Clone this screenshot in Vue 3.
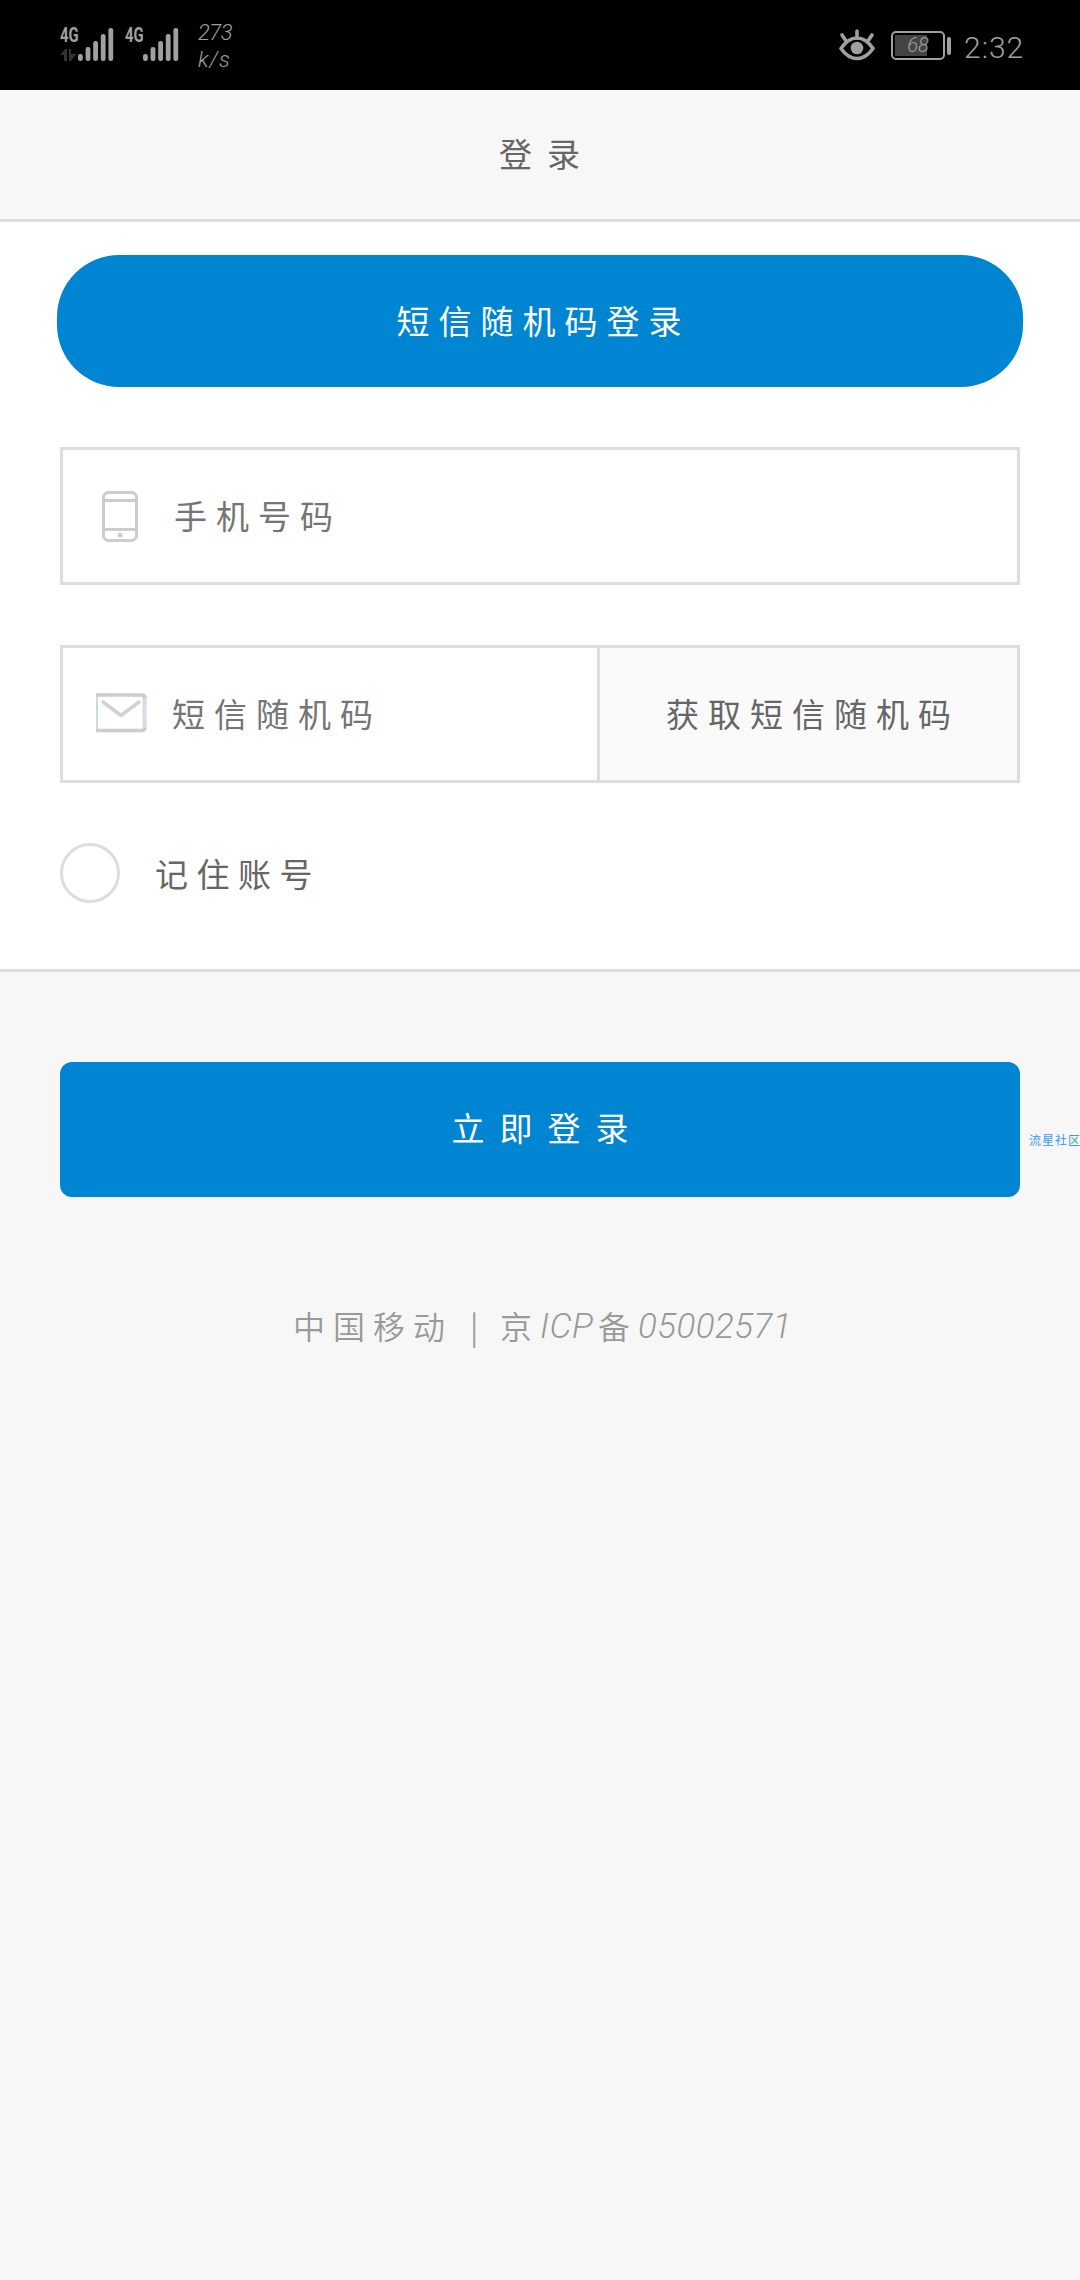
<script setup>
import { ref } from 'vue'

const phone = ref('')
const code = ref('')
const remember = ref(false)

// 信号格高度
const bars = [7, 14, 20, 27, 33]
const sims = [
  { name: '4G', data: true },
  { name: '4G', data: false }
]
</script>

<template>
  <div class="page">
    <div class="status-bar">
      <div v-for="(sim, i) in sims" :key="i" class="sim">
        <div class="sim-type">
          <span class="sim-name">{{ sim.name }}</span>
          <svg v-if="sim.data" class="sim-data" viewBox="0 0 16 12" aria-hidden="true">
            <path d="M0 6L5 0h2v12H4V6zM9 0h2v5h5l-5 7H9z" fill="#333" />
          </svg>
        </div>
        <svg class="sim-bars" viewBox="0 0 36 33" aria-hidden="true">
          <rect
            v-for="(h, n) in bars"
            :key="n"
            :x="n * 7.6"
            :y="33 - h"
            width="4.8"
            :height="h"
            rx="2.2"
            fill="#a0a0a0"
          />
        </svg>
      </div>
      <div class="speed">
        <span>273</span>
        <span>k/s</span>
      </div>
      <div class="status-right">
        <svg class="eye" viewBox="0 0 36 32" aria-hidden="true">
          <path d="M2 19.500Q9 9 18 9T34 19.500Q27 29.500 18 29.500T2 19.500z" fill="none" stroke="#a0a0a0" stroke-width="3.600" stroke-linejoin="round" />
          <circle cx="18" cy="19" r="6.300" fill="#a0a0a0" />
          <path d="M18 2v7M3 6l4 6M33 6l-4 6" stroke="#a0a0a0" stroke-width="3.600" stroke-linecap="round" />
        </svg>
        <div class="battery">
          <div class="battery-body">
            <div class="battery-level"></div>
            <span class="battery-text">68</span>
          </div>
          <div class="battery-cap"></div>
        </div>
        <span class="time">2:32</span>
      </div>
    </div>

    <header class="header">登录</header>

    <section class="form">
      <button class="tab">短信随机码登录</button>

      <div class="field">
        <svg class="icon-phone" viewBox="0 0 36 51" aria-hidden="true">
          <rect x="1.500" y="1.500" width="33" height="48" rx="5" fill="none" stroke="#ccc" stroke-width="3" />
          <path d="M2 9.500h32M2 38.500h32" stroke="#ccc" stroke-width="3" />
          <circle cx="18" cy="44" r="2.500" fill="#ccc" />
        </svg>
        <input v-model="phone" class="input" type="tel" placeholder="手机号码" />
      </div>

      <div class="field">
        <svg class="icon-mail" viewBox="0 0 51 40" aria-hidden="true">
          <path d="M1 2v36" stroke="#c9dce4" stroke-width="2" />
          <path d="M48.500 3v34" stroke="#d9dae6" stroke-width="4" />
          <path d="M0 2h46q3 0 3 3M0 37.500h46q3 0 3-3" fill="none" stroke="#ccc" stroke-width="3.500" />
          <path d="M7 9l18 13.500L43 9" fill="none" stroke="#d2d0d0" stroke-width="3.500" stroke-linecap="round" stroke-linejoin="round" />
        </svg>
        <input v-model="code" class="input input-code" type="text" placeholder="短信随机码" />
        <button class="get-code">获取短信随机码</button>
      </div>

      <div class="remember" @click="remember = !remember">
        <span class="radio" :class="{ checked: remember }"></span>
        <span>记住账号</span>
      </div>
    </section>

    <div class="submit-row">
      <button class="submit">立即登录</button>
      <span class="community">流星社区</span>
    </div>

    <footer class="footer">
      <span>中国移动</span>
      <span class="bar">|</span>
      <span>京</span>
      <span class="latin icp">ICP</span>
      <span>备</span>
      <span class="latin">05002571</span>
    </footer>
  </div>
</template>

<style>
body {
  background: #f7f7f7;
}
</style>

<style scoped>
.page {
  width: 1080px;
  min-height: 2280px;
  background: #f7f7f7;
  color: #666;
  font-family: "Noto Sans CJK SC", sans-serif;
  font-weight: 400;
  font-size: 33px;
  letter-spacing: 9px;
}

.page * {
  box-sizing: border-box;
}

button,
input {
  margin: 0;
  padding: 0;
  border: 0;
  background: none;
  font: inherit;
  letter-spacing: inherit;
  outline: none;
}

/* 状态栏 */
.status-bar {
  display: flex;
  align-items: flex-start;
  height: 90px;
  padding: 28px 56px 0 60px;
  background: #000;
  color: #a0a0a0;
  letter-spacing: 0;
}

.sim {
  display: flex;
  width: 65px;
}

.sim-type {
  display: flex;
  flex-direction: column;
  width: 18px;
}

.sim-name {
  width: 26px;
  font: bold 20px/15px Roboto, sans-serif;
  transform: scaleX(0.74);
  transform-origin: left;
}

.sim-data {
  width: 16px;
  height: 12px;
  margin-top: 6px;
}

.sim-bars {
  width: 36px;
  height: 33px;
}

.speed {
  display: flex;
  flex-direction: column;
  margin: -9px 0 0 8px;
  font: italic 300 22px/27px Roboto, sans-serif;
}

.speed span {
  letter-spacing: -0.5px;
}

.speed span:last-child {
  letter-spacing: 1px;
}

.status-right {
  display: flex;
  margin-left: auto;
}

.eye {
  width: 36px;
  height: 32px;
  margin-top: 1px;
}

.battery {
  display: flex;
  align-items: center;
  height: 29px;
  margin: 3px 0 0 16px;
}

.battery-body {
  display: flex;
  position: relative;
  width: 54px;
  height: 29px;
  padding: 2px;
  border: 2px solid #a0a0a0;
  border-radius: 5px;
}

.battery-level {
  width: 32px;
  height: 21px;
  background: #444;
}

.battery-text {
  position: absolute;
  left: 0;
  width: 100%;
  top: 0;
  font: italic 300 20px/25px Roboto, sans-serif;
  text-align: center;
}

.battery-cap {
  width: 4px;
  height: 18px;
  margin-left: 2px;
  border-radius: 2px;
  background: #a0a0a0;
}

.time {
  width: 60px;
  margin-left: 13px;
  font: 300 30px/40px Roboto, sans-serif;
  letter-spacing: 1px;
}

/* 标题 */
.header {
  display: flex;
  align-items: center;
  justify-content: center;
  height: 132px;
  padding: 0 0 3px 14px;
  border-bottom: 3px solid #ddd;
  letter-spacing: 15px;
}

/* 表单 */
.form {
  display: flex;
  flex-direction: column;
  height: 750px;
  padding: 33px 60px 0;
  background: #fff;
  border-bottom: 3px solid #ddd;
}

.tab {
  height: 132px;
  margin: 0 -3px;
  padding: 0 0 3px 7px;
  border-radius: 62px;
  background: #0085d2;
  color: #fff;
}

.field {
  display: flex;
  align-items: center;
  height: 138px;
  margin-top: 60px;
  border: 3px solid #ddd;
}

.icon-phone {
  width: 36px;
  height: 51px;
  margin-left: 39px;
}

.icon-mail {
  width: 51px;
  height: 40px;
  margin: 0 0 2px 33px;
}

.input {
  flex: 1;
  min-width: 0;
  height: 100%;
  margin-left: 36px;
  padding-bottom: 2px;
  color: #666;
}

.input-code {
  margin-left: 25px;
}

.input::placeholder {
  color: #757575;
  opacity: 1;
}

.get-code {
  width: 420px;
  height: 100%;
  padding: 0 0 2px 9px;
  border-left: 3px solid #ddd;
  background: #fafafa;
  color: #666;
}

.remember {
  display: flex;
  align-items: center;
  gap: 35px;
  height: 60px;
  margin-top: 60px;
  letter-spacing: 8.5px;
}

.radio {
  width: 60px;
  height: 60px;
  border: 3px solid #ddd;
  border-radius: 50%;
}

.radio.checked {
  border: 18px solid #0085d2;
}

/* 登录按钮 */
.submit-row {
  display: flex;
  align-items: center;
  padding: 90px 0 0 60px;
}

.submit {
  width: 960px;
  height: 135px;
  padding: 0 0 5px 15px;
  border-radius: 12px;
  background: #0085d2;
  color: #fff;
  letter-spacing: 15px;
}

.community {
  margin: 20px 0 0 9px;
  color: #359bec;
  font-size: 12px;
  letter-spacing: 1px;
  white-space: nowrap;
  width: 51px;
  overflow: hidden;
}

/* 备案信息 */
.footer {
  display: flex;
  align-items: center;
  height: 54px;
  margin-top: 101px;
  padding-left: 293px;
  color: #999;
  font-size: 32px;
  font-weight: 350;
  letter-spacing: 8px;
}

.bar {
  width: 47px;
  padding-left: 17px;
}

.latin {
  padding-top: 3px;
  font-family: Roboto, sans-serif;
  font-style: italic;
  font-weight: 300;
  font-size: 35px;
  letter-spacing: 0.4px;
}

.icp {
  width: 58px;
}
</style>
